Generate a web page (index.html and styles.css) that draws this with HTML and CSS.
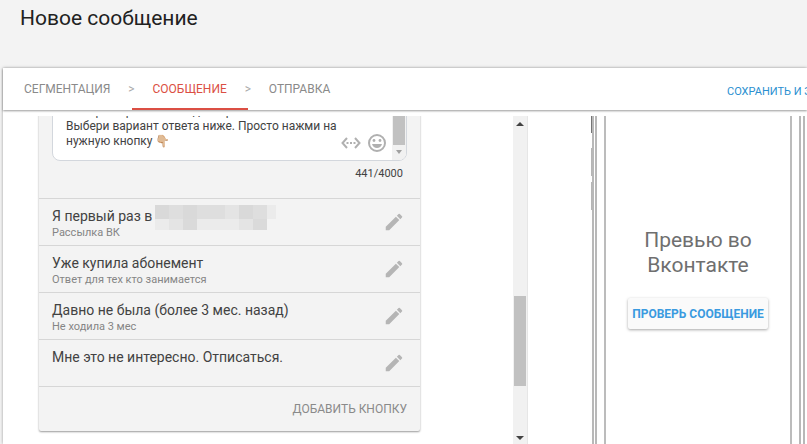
FILE: index.html
```
<!DOCTYPE html>
<html lang="ru">

<head>
  <meta charset="UTF-8" />
  <meta name="viewport" content="width=device-width, initial-scale=1.0" />
  <title>Новое сообщение</title>
  <link rel="stylesheet" href="styles.css">
</head>

<body>
  <svg class="sprite" aria-hidden="true">
    <symbol id="pencil" viewBox="0 0 24 24">
      <path d="M3 17.25V21h3.75L17.81 9.94l-3.75-3.75L3 17.25zM20.71 7.04a1 1 0 0 0 0-1.41l-2.34-2.34a1 1 0 0 0-1.41 0l-1.83 1.83 3.75 3.75 1.83-1.83z" />
    </symbol>
  </svg>

  <header class="page-header">
    <h1>Новое сообщение</h1>
  </header>

  <main class="panel">
    <div class="toolbar">
      <nav class="steps">
        <a href="#segment" class="step">Сегментация</a>
        <span class="sep">&gt;</span>
        <a href="#message" class="step active">Сообщение</a>
        <span class="sep">&gt;</span>
        <a href="#send" class="step">Отправка</a>
      </nav>
      <div class="actions">
        <button type="button" class="save">Сохранить и закрыть</button>
      </div>
    </div>

    <div class="workspace">
      <div class="editor">
        <div class="editor-scroll">
          <section class="card">
            <div class="composer">
              <div class="bubble">
                <textarea class="message" rows="3" aria-label="Текст сообщения">Не теряй время и находи мир
Выбери вариант ответа ниже. Просто нажми на
нужную кнопку 👇🏼</textarea>
                <div class="tools">
                  <button type="button" aria-label="Переменная">
                    <svg width="20" height="14" viewBox="0 0 20 14">
                      <path d="M6 2L1.500 7L6 12M14 2l4.500 5L14 12" fill="none" stroke="currentColor" stroke-width="2" />
                      <path d="M5.500 6h2v2h-2zM9 6h2v2H9zM12.500 6h2v2h-2z" fill="currentColor" />
                    </svg>
                  </button>
                  <button type="button" aria-label="Смайлик">
                    <svg width="18" height="18" viewBox="0 0 18 18">
                      <circle cx="9" cy="9" r="8" fill="none" stroke="currentColor" stroke-width="2" />
                      <circle cx="6" cy="6.500" r="1.400" fill="currentColor" />
                      <circle cx="12" cy="6.500" r="1.400" fill="currentColor" />
                      <path d="M4 10h10c-.7 2.500-2.600 4-5 4s-4.300-1.500-5-4z" fill="currentColor" />
                    </svg>
                  </button>
                </div>
                <div class="scrollbar small">
                  <div class="thumb"></div>
                  <svg width="6" height="4" viewBox="0 0 6 4"><path d="M0 0h6L3 4z" /></svg>
                </div>
              </div>
              <div class="counter">441/4000</div>
            </div>

            <ul class="answers">
              <li>
                <div class="answer">
                  <div class="title">Я первый раз в
                    <svg class="mosaic" width="121" height="26" viewBox="0 0 121 26" aria-hidden="true">
                      <path fill="#d9d9d9" d="M0 0h14v14H0zM28 0h14v14H28zM84 0h14v14H84z" />
                      <path fill="#dedede" d="M14 0h14v14H14zM42 0h14v14H42zM56 0h14v14H56zM98 0h14v14H98z" />
                      <path fill="#e4e4e4" d="M70 0h14v14H70zM14 14h14v11H14zM84 14h14v11H84z" />
                      <path fill="#dadada" d="M28 14h14v11H28zM98 14h14v11H98z" />
                      <path fill="#ebebeb" d="M0 14h14v11H0zM42 14h42v11H42zM112 0h9v14h-9z" />
                    </svg>
                  </div>
                  <div class="note">Рассылка ВК</div>
                </div>
                <button type="button" aria-label="Изменить"><svg width="22" height="22"><use href="#pencil" /></svg></button>
              </li>
              <li>
                <div class="answer">
                  <div class="title">Уже купила абонемент</div>
                  <div class="note">Ответ для тех кто занимается</div>
                </div>
                <button type="button" aria-label="Изменить"><svg width="22" height="22"><use href="#pencil" /></svg></button>
              </li>
              <li>
                <div class="answer">
                  <div class="title">Давно не была (более 3 мес. назад)</div>
                  <div class="note">Не ходила 3 мес</div>
                </div>
                <button type="button" aria-label="Изменить"><svg width="22" height="22"><use href="#pencil" /></svg></button>
              </li>
              <li>
                <div class="answer">
                  <div class="title">Мне это не интересно. Отписаться.</div>
                </div>
                <button type="button" aria-label="Изменить"><svg width="22" height="22"><use href="#pencil" /></svg></button>
              </li>
            </ul>

            <div class="card-footer">
              <button type="button" class="add">Добавить кнопку</button>
            </div>
          </section>
        </div>

        <div class="scrollbar">
          <svg width="8" height="4" viewBox="0 0 8 4"><path d="M0 4h8L4 0z" /></svg>
          <div class="track">
            <div class="thumb"></div>
          </div>
          <svg width="8" height="4" viewBox="0 0 8 4"><path d="M0 0h8L4 4z" /></svg>
        </div>
      </div>

      <div class="preview">
        <div class="phone">
          <div class="keys">
            <span class="key dark"></span>
            <span class="key"></span>
            <span class="key"></span>
          </div>
          <div class="phone-case">
            <div class="screen">
              <h2>Превью во Вконтакте</h2>
              <button type="button" class="check">Проверь сообщение</button>
            </div>
          </div>
        </div>
      </div>
    </div>
  </main>
</body>

</html>
```

FILE: styles.css
```
* {
  box-sizing: border-box;
}

body {
  display: flex;
  flex-direction: column;
  height: 100vh;
  margin: 0;
  overflow: hidden;
  background: #f3f3f3;
  color: #424242;
  font-family: Roboto, "Liberation Sans", sans-serif;
}

button {
  padding: 0;
  border: none;
  background: none;
  font-family: inherit;
  cursor: pointer;
}

svg {
  display: block;
}

.sprite {
  position: absolute;
  width: 0;
  height: 0;
}

.page-header {
  height: 68px;
  padding: 6px 20px;
}

.page-header h1 {
  margin: 0;
  color: #212121;
  font-size: 21px;
  font-weight: 400;
  line-height: 24px;
}

.panel {
  display: flex;
  flex: 1;
  flex-direction: column;
  min-height: 0;
  margin-left: 3px;
  background: #fff;
  box-shadow: 0 0 3px rgba(0, 0, 0, 0.35);
}

/* steps */
.toolbar {
  display: flex;
  justify-content: space-between;
  height: 42px;
  box-shadow: 0 1px 2px rgba(0, 0, 0, 0.4);
}

.steps {
  display: flex;
}

.step {
  height: 42px;
  padding: 0 21px;
  color: #8a8a8a;
  font-size: 12px;
  line-height: 42px;
  text-decoration: none;
  text-transform: uppercase;
}

.step.active {
  border-bottom: 2px solid #db4f44;
  color: #db4f44;
}

.sep {
  width: 8px;
  margin: 0 -4px;
  color: #aaa;
  font-size: 12px;
  line-height: 42px;
  text-align: center;
}

.actions {
  width: 80px;
  overflow: hidden;
}

.save {
  height: 46px;
  color: #2a8fd0;
  font-size: 11px;
  text-transform: uppercase;
  white-space: nowrap;
}

.workspace {
  display: grid;
  flex: 1;
  grid-template-columns: minmax(0, 525fr) minmax(0, 279fr);
  grid-template-rows: minmax(0, 1fr);
  min-height: 0;
  margin-top: 6px;
  overflow: hidden;
}

/* editor, scrolled to the end */
.editor {
  display: flex;
  min-width: 0;
  overflow: hidden;
}

.editor-scroll {
  display: flex;
  flex: 1;
  flex-direction: column;
  justify-content: flex-end;
  min-width: 0;
  padding: 0 93px 13px 36px;
}

.card {
  border-radius: 2px;
  background: #f3f3f3;
  box-shadow: 0 1px 2px rgba(0, 0, 0, 0.4);
}

.composer {
  padding: 20px 13px 16px;
}

.bubble {
  display: flex;
  align-items: flex-end;
  border: 1px solid #d3d7dd;
  border-radius: 8px;
  background: #fff;
  overflow: hidden;
}

.message {
  flex: 1;
  min-width: 0;
  height: 56px;
  margin: 0;
  padding: 0 0 8px 13px;
  border: none;
  outline: none;
  background: none;
  color: #424242;
  font-family: Roboto, "Noto Color Emoji", sans-serif;
  font-size: 12px;
  line-height: 15px;
  overflow: hidden;
  resize: none;
  white-space: pre;
}

.tools {
  display: flex;
  align-items: center;
  gap: 7px;
  margin-left: -45px;
  padding: 0 6px 8px 0;
}

.tools button {
  color: #b0b0b0;
}

.counter {
  padding: 5px 4px 0 0;
  font-size: 11px;
  line-height: 16px;
  text-align: right;
}

.answers {
  margin: 0;
  padding: 0;
  list-style: none;
}

.answers li {
  display: flex;
  align-items: center;
  justify-content: space-between;
  height: 47px;
  padding: 0 15px 0 13px;
  border-top: 1px solid #d6d6d6;
}

.answer {
  align-self: flex-start;
  padding-top: 8px;
}

.title {
  display: flex;
  gap: 3px;
  height: 18px;
  font-size: 14px;
  line-height: 18px;
}

.mosaic {
  margin-top: -2px;
}

.note {
  color: #858585;
  font-size: 11px;
  line-height: 16px;
}

.answers button {
  color: #b5b5b5;
}

.answers svg {
  fill: currentColor;
}

.card-footer {
  display: flex;
  align-items: center;
  justify-content: flex-end;
  height: 45px;
  padding: 0 13px;
  border-top: 1px solid #d6d6d6;
}

.add {
  color: #8a8a8a;
  font-size: 12px;
  text-transform: uppercase;
}

/* scrollbars */
.scrollbar {
  display: flex;
  flex-direction: column;
  align-items: center;
  justify-content: space-between;
  width: 15px;
  padding: 6px 0 4px;
  border-right: 1px solid #e6e6e6;
  background: #f1f1f1;
  fill: #424242;
}

.track {
  display: flex;
  flex: 1;
  flex-direction: column;
  justify-content: flex-end;
  padding-bottom: 50px;
}

.thumb {
  width: 12px;
  height: 90px;
  background: #c1c1c1;
}

.scrollbar.small {
  width: 14px;
  height: 58px;
  padding: 0 0 6px;
  border: none;
  fill: #a0a0a0;
}

.scrollbar.small .thumb {
  height: 43px;
}

/* phone */
.preview {
  display: flex;
  justify-content: flex-end;
}

.phone {
  display: flex;
  width: 216px;
  padding-right: 2px;
}

.keys {
  display: flex;
  flex-direction: column;
  gap: 6px;
  width: 1px;
}

.key {
  height: 28px;
  background: #b5b5b5;
}

.key.dark {
  height: 17px;
  margin-bottom: 9px;
  background: #757575;
}

.phone-case {
  flex: 1;
  padding: 0 7px;
  border: double #b8b8b8;
  border-width: 0 6px 0 5px;
}

.screen {
  display: flex;
  flex-direction: column;
  align-items: center;
  height: 100%;
  padding-top: 112px;
  border: solid #bcbcbc;
  border-width: 0 2px;
}

.screen h2 {
  width: 140px;
  margin: 0 0 20px;
  color: #6f6f6f;
  font-size: 21px;
  font-weight: 400;
  line-height: 25px;
  text-align: center;
}

.check {
  height: 31px;
  padding: 0 4px;
  border-radius: 2px;
  background: #fafafa;
  box-shadow: 0 1px 3px rgba(0, 0, 0, 0.35);
  color: #3a9be0;
  font-size: 12px;
  font-weight: 700;
  text-transform: uppercase;
  white-space: nowrap;
}
```
